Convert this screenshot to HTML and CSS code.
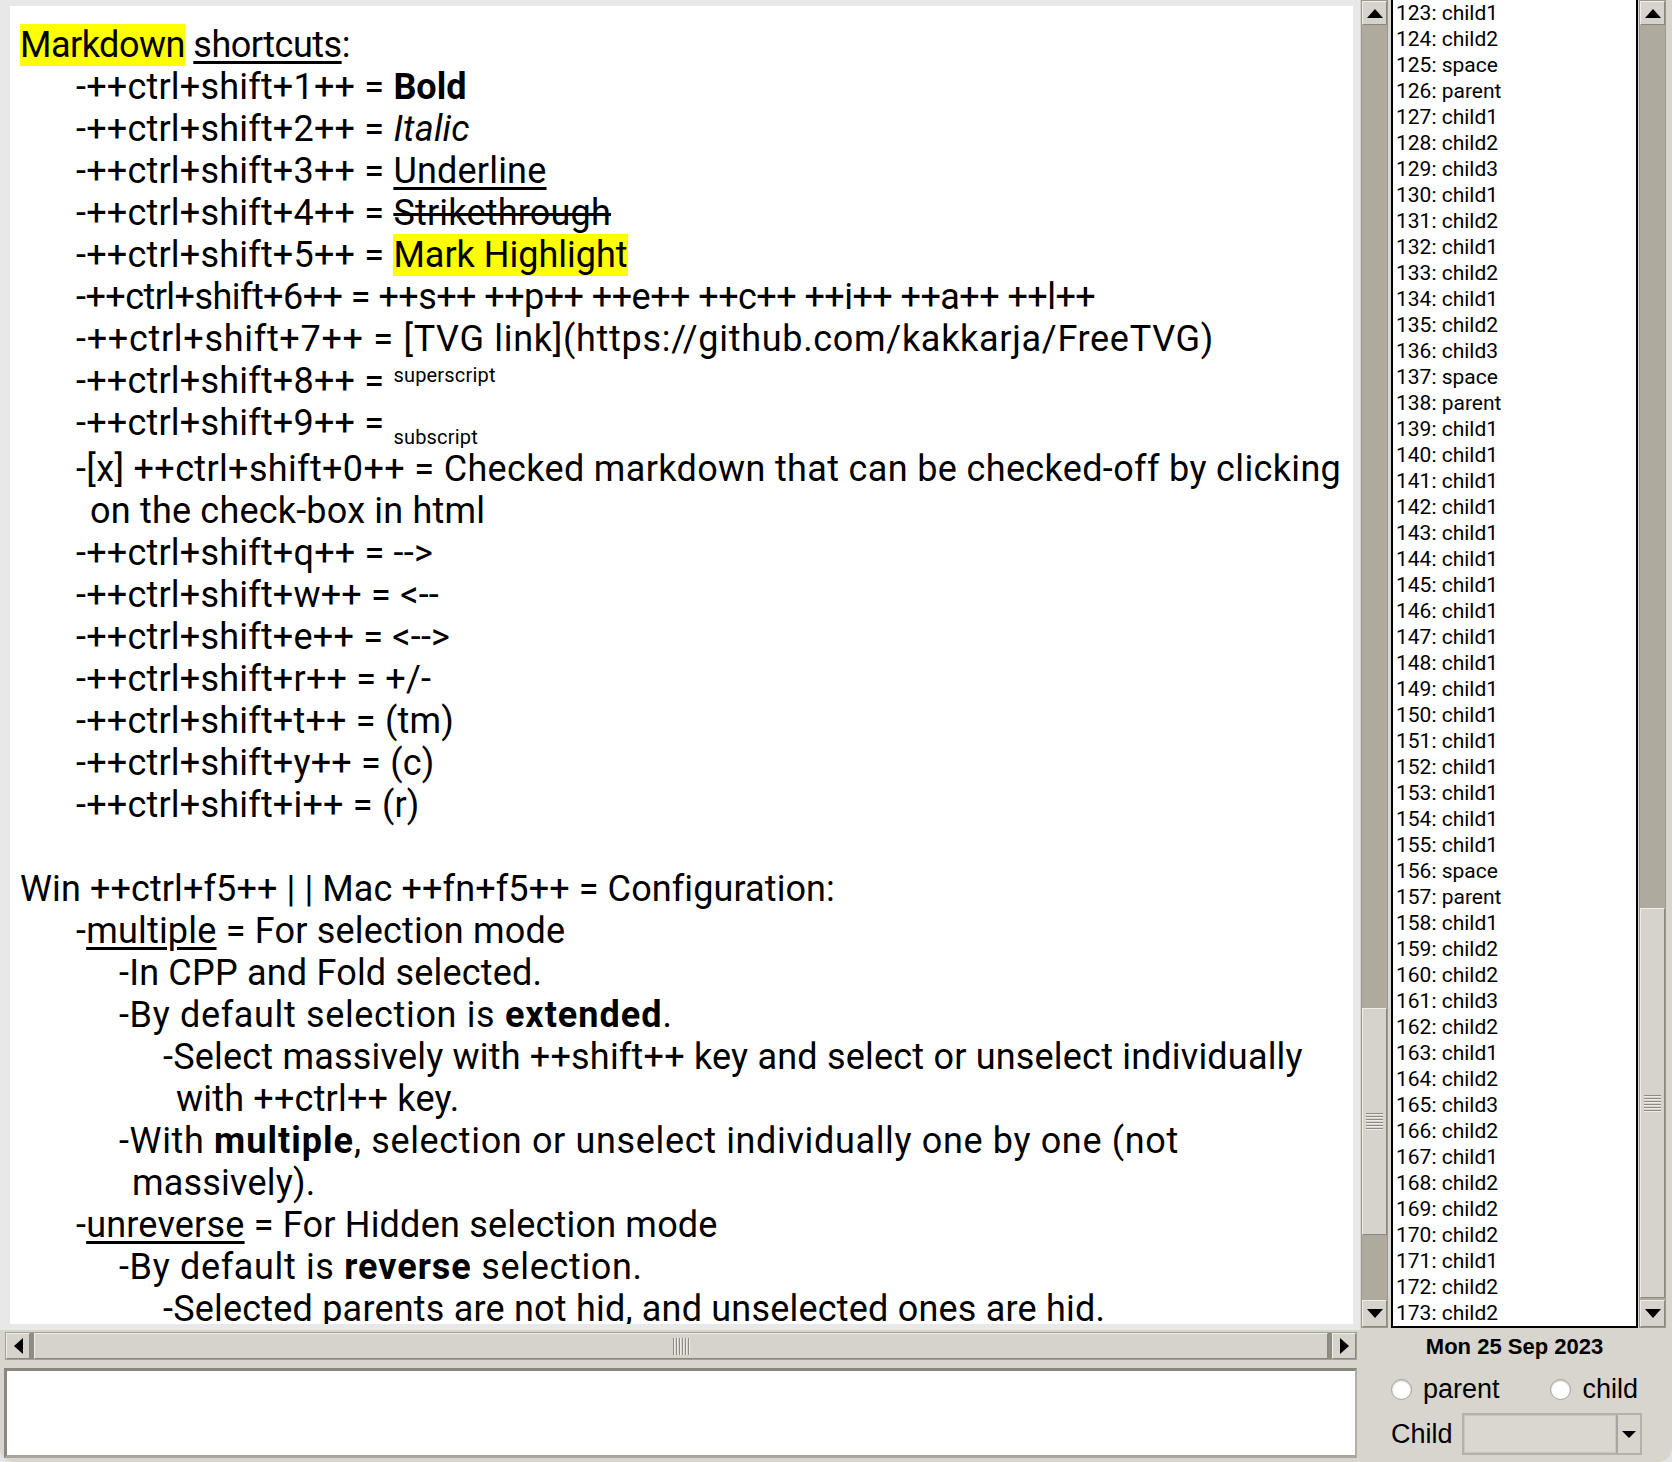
FILE: index.html
```html
<!DOCTYPE html>
<html>
<head>
<meta charset="utf-8">
<link rel="stylesheet" href="styles.css">
</head>
<body>
<div class="app">
  <div class="top">
    <div class="textframe">
      <div class="text">
        <div class="ln l0 tight"><span class="hl">Markdown</span> <span class="ul">shortcuts</span>:</div>
        <div class="ln l1">-++ctrl+shift+1++ = <b class="bn">Bold</b></div>
        <div class="ln l1">-++ctrl+shift+2++ = <i>Italic</i></div>
        <div class="ln l1">-++ctrl+shift+3++ = <span class="ul">Underline</span></div>
        <div class="ln l1">-++ctrl+shift+4++ = <span class="st">Strikethrough</span></div>
        <div class="ln l1">-++ctrl+shift+5++ = <span class="hl plain">Mark Highlight</span></div>
        <div class="ln l1 tighter">-++ctrl+shift+6++ = ++s++ ++p++ ++e++ ++c++ ++i++ ++a++ ++l++</div>
        <div class="ln l1 wide">-++ctrl+shift+7++ = [TVG link](https://github.com/kakkarja/FreeTVG)</div>
        <div class="ln l1">-++ctrl+shift+8++ = <span class="sup">superscript</span></div>
        <div class="ln l1 subline">-++ctrl+shift+9++ = <span class="sub">subscript</span></div>
        <div class="ln l1 mid">-[x] ++ctrl+shift+0++ = Checked markdown that can be checked-off by clicking</div>
        <div class="ln c1">on the check-box in html</div>
        <div class="ln l1">-++ctrl+shift+q++ = --&gt;</div>
        <div class="ln l1">-++ctrl+shift+w++ = &lt;--</div>
        <div class="ln l1">-++ctrl+shift+e++ = &lt;--&gt;</div>
        <div class="ln l1">-++ctrl+shift+r++ = +/-</div>
        <div class="ln l1">-++ctrl+shift+t++ = (tm)</div>
        <div class="ln l1">-++ctrl+shift+y++ = (c)</div>
        <div class="ln l1">-++ctrl+shift+i++ = (r)</div>
        <div class="ln l0"></div>
        <div class="ln l0 snug">Win ++ctrl+f5++ | | Mac ++fn+f5++ = Configuration:</div>
        <div class="ln l1">-<span class="ul">multiple</span> = For selection mode</div>
        <div class="ln l2">-In CPP and Fold selected.</div>
        <div class="ln l2 loose">-By default selection is <b>extended</b>.</div>
        <div class="ln l3">-Select massively with ++shift++ key and select or unselect individually</div>
        <div class="ln c3">with ++ctrl++ key.</div>
        <div class="ln l2 loose">-With <b>multiple</b>, selection or unselect individually one by one (not</div>
        <div class="ln c2">massively).</div>
        <div class="ln l1">-<span class="ul">unreverse</span> = For Hidden selection mode</div>
        <div class="ln l2 loose">-By default is <b>reverse</b> selection.</div>
        <div class="ln l3">-Selected parents are not hid, and unselected ones are hid.</div>
      </div>
    </div>

    <div class="vscroll">
      <div class="sbtn"><svg width="16" height="9" viewBox="0 0 16 9"><polygon points="0,9 16,9 8,0" fill="#000"/></svg></div>
      <div class="track" style="height:983px"></div>
      <div class="thumb" style="height:227px"><div class="grip-h"></div></div>
      <div class="track fill"></div>
      <div class="sbtn down"><svg width="16" height="9" viewBox="0 0 16 9"><polygon points="0,0 16,0 8,9" fill="#000"/></svg></div>
    </div>

    <div class="listbox">
      <div class="row">123: child1</div>
      <div class="row">124: child2</div>
      <div class="row">125: space</div>
      <div class="row">126: parent</div>
      <div class="row">127: child1</div>
      <div class="row">128: child2</div>
      <div class="row">129: child3</div>
      <div class="row">130: child1</div>
      <div class="row">131: child2</div>
      <div class="row">132: child1</div>
      <div class="row">133: child2</div>
      <div class="row">134: child1</div>
      <div class="row">135: child2</div>
      <div class="row">136: child3</div>
      <div class="row">137: space</div>
      <div class="row">138: parent</div>
      <div class="row">139: child1</div>
      <div class="row">140: child1</div>
      <div class="row">141: child1</div>
      <div class="row">142: child1</div>
      <div class="row">143: child1</div>
      <div class="row">144: child1</div>
      <div class="row">145: child1</div>
      <div class="row">146: child1</div>
      <div class="row">147: child1</div>
      <div class="row">148: child1</div>
      <div class="row">149: child1</div>
      <div class="row">150: child1</div>
      <div class="row">151: child1</div>
      <div class="row">152: child1</div>
      <div class="row">153: child1</div>
      <div class="row">154: child1</div>
      <div class="row">155: child1</div>
      <div class="row">156: space</div>
      <div class="row">157: parent</div>
      <div class="row">158: child1</div>
      <div class="row">159: child2</div>
      <div class="row">160: child2</div>
      <div class="row">161: child3</div>
      <div class="row">162: child2</div>
      <div class="row">163: child1</div>
      <div class="row">164: child2</div>
      <div class="row">165: child3</div>
      <div class="row">166: child2</div>
      <div class="row">167: child1</div>
      <div class="row">168: child2</div>
      <div class="row">169: child2</div>
      <div class="row">170: child2</div>
      <div class="row">171: child1</div>
      <div class="row">172: child2</div>
      <div class="row">173: child2</div>
    </div>

    <div class="vscroll right">
      <div class="sbtn"><svg width="16" height="9" viewBox="0 0 16 9"><polygon points="0,9 16,9 8,0" fill="#000"/></svg></div>
      <div class="track" style="height:883px"></div>
      <div class="thumb" style="height:390px"><div class="grip-h"></div></div>
      <div class="track fill"></div>
      <div class="sbtn down"><svg width="16" height="9" viewBox="0 0 16 9"><polygon points="0,0 16,0 8,9" fill="#000"/></svg></div>
    </div>
  </div>

  <div class="bottom">
    <div class="leftbottom">
      <div class="hscroll">
        <div class="hbtn"><svg width="9" height="16" viewBox="0 0 9 16"><polygon points="9,0 9,16 0,8" fill="#000"/></svg></div>
        <div class="hthumb"><div class="grip-v"></div></div>
        <div class="hbtn"><svg width="9" height="16" viewBox="0 0 9 16"><polygon points="0,0 0,16 9,8" fill="#000"/></svg></div>
      </div>
      <div class="entry"></div>
    </div>
    <div class="rightbottom">
      <div class="date">Mon 25 Sep 2023</div>
      <div class="radios">
        <label class="radio"><span class="dot"></span>parent</label>
        <label class="radio"><span class="dot"></span>child</label>
      </div>
      <div class="comborow">
        <span class="clabel">Child</span>
        <div class="combo">
          <div class="cfield"></div>
          <div class="cbtn"><svg width="14" height="7" viewBox="0 0 14 7"><polygon points="0,0 14,0 7,7" fill="#000"/></svg></div>
        </div>
      </div>
    </div>
  </div>
</div>
</body>
</html>
```
FILE: styles.css
```css
* { box-sizing: border-box; }
html, body { margin: 0; padding: 0; }
body {
  width: 1672px;
  height: 1462px;
  overflow: hidden;
  background: #e4e4e4;
  font-family: Roboto, "Liberation Sans", sans-serif;
  color: #000;
}
.app {
  width: 1672px;
  height: 1462px;
  background: #d8d5cf;
  border-radius: 0 0 14px 14px;
  overflow: hidden;
  display: flex;
  flex-direction: column;
}
.top {
  display: flex;
  height: 1330px;
  flex: none;
}
.textframe {
  width: 1360px;
  height: 1330px;
  flex: none;
  background: #e8e8e8;
  padding: 6px 7px 6px 10px;
}
.text {
  background: #fff;
  height: 100%;
  overflow: hidden;
  padding: 18px 0 0 10px;
  font-size: 36px;
  letter-spacing: 0.2px;
}
.ln {
  height: 42px;
  line-height: 42px;
  white-space: pre;
}
.tight { letter-spacing: -0.5px; }
.tighter { letter-spacing: -0.55px; }
.wide { letter-spacing: 0.7px; }
.mid { letter-spacing: 0.35px; }
.snug { letter-spacing: 0.1px; }
.loose { letter-spacing: 0.65px; }
.subline { height: 46px; }
.l1 { padding-left: 56px; }
.l2 { padding-left: 99px; }
.l3 { padding-left: 143px; }
.c1 { padding-left: 70px; }
.c2 { padding-left: 112px; }
.c3 { padding-left: 156px; }
.hl {
  display: inline-block;
  background: #ffff00;
  height: 42px;
  line-height: 42px;
}
.hl.plain { letter-spacing: 0; }
.ul {
  text-decoration: underline;
  text-decoration-thickness: 3px;
  text-underline-offset: 4px;
}
.st {
  text-decoration: line-through;
  text-decoration-thickness: 3px;
}
b { font-weight: 700; letter-spacing: 1px; }
b.bn { letter-spacing: 0; }
.sup {
  font-size: 20px;
  line-height: 1;
  letter-spacing: 0.2px;
  vertical-align: 11px;
}
.sub {
  font-size: 20px;
  line-height: 1;
  letter-spacing: 0.2px;
  vertical-align: -9px;
}

/* scrollbars */
.vscroll {
  width: 27px;
  height: 1328px;
  margin-left: 1px;
  flex: none;
  background: #aeaa9e;
  border: 1px solid #9c988d;
  display: flex;
  flex-direction: column;
}
.sbtn {
  height: 24px;
  flex: none;
  background: #d6d3cc;
  border: 1px solid;
  border-color: #f0eee9 #8b877d #8b877d #f0eee9;
  display: flex;
  align-items: center;
  justify-content: center;
}
.sbtn.down { height: 27px; }
.track { flex: none; }
.track.fill { flex: 1; }
.thumb {
  flex: none;
  background: #d6d3cc;
  border: 1px solid;
  border-color: #f0eee9 #8b877d #8b877d #f0eee9;
  display: flex;
  align-items: center;
  justify-content: center;
}
.grip-h {
  width: 17px;
  height: 17px;
  background: repeating-linear-gradient(to bottom, #8d8a82 0 1px, #ecebe7 1px 2px, transparent 2px 3px);
}
.listbox {
  width: 247px;
  height: 1328px;
  margin-left: 3px;
  flex: none;
  background: #fff;
  border: 2px solid #000;
  border-top: none;
  padding-left: 3px;
  overflow: hidden;
}
.row {
  height: 26px;
  line-height: 26px;
  font-size: 21px;
  white-space: pre;
}

/* bottom */
.bottom {
  display: flex;
  flex: 1;
}
.leftbottom {
  width: 1360px;
  flex: none;
  padding: 2px 3px 0 5px;
}
.hscroll {
  height: 28px;
  background: #8f8c83;
  border: 1px solid #a29f96;
  display: flex;
  gap: 4px;
}
.hbtn {
  width: 24px;
  flex: none;
  background: #d6d3cc;
  border: 1px solid;
  border-color: #f0eee9 #8b877d #8b877d #f0eee9;
  display: flex;
  align-items: center;
  justify-content: center;
}
.hthumb {
  flex: 1;
  background: #d6d3cc;
  border: 1px solid;
  border-color: #f0eee9 #8b877d #8b877d #f0eee9;
  display: flex;
  align-items: center;
  justify-content: center;
}
.grip-v {
  width: 17px;
  height: 17px;
  background: repeating-linear-gradient(to right, #8d8a82 0 1px, #ecebe7 1px 2px, transparent 2px 3px);
}
.entry {
  margin: 8px 0 0 -1px;
  height: 90px;
  background: #fff;
  border-style: solid;
  border-width: 3px 2px 3px 3px;
  border-color: #8a877f #b2afa7 #a9a69e #8a877f;
}
.rightbottom {
  flex: 1;
  padding-left: 31px;
  font-family: "Liberation Sans", Arial, sans-serif;
}
.date {
  width: 247px;
  margin-top: 4px;
  height: 26px;
  line-height: 26px;
  text-align: center;
  font-weight: 700;
  font-size: 22px;
}
.radios {
  width: 247px;
  margin-top: 14px;
  height: 30px;
  display: flex;
  justify-content: space-between;
  align-items: center;
  font-size: 27px;
}
.radio {
  display: flex;
  align-items: center;
  gap: 11px;
}
.dot {
  width: 21px;
  height: 21px;
  border-radius: 50%;
  background: radial-gradient(circle at 50% 55%, #ffffff 0 55%, #e9e8e5 75%);
  border: 1px solid #a9a69f;
  box-shadow: inset 0 1px 1px rgba(0,0,0,0.15);
}
.comborow {
  margin-top: 9px;
  display: flex;
  align-items: center;
  gap: 12px;
  font-size: 27px;
}
.clabel { width: 59px; }
.combo {
  width: 180px;
  height: 42px;
  display: flex;
  border: 2px solid #b4b1a9;
  background: #d8d5cf;
}
.cfield {
  flex: 1;
  background: #dad7d1;
  border: 1px solid #c9c6bf;
}
.cbtn {
  width: 24px;
  flex: none;
  border-left: 2px solid #a9a69e;
  display: flex;
  align-items: center;
  justify-content: center;
  background: #d8d5cf;
}
```
